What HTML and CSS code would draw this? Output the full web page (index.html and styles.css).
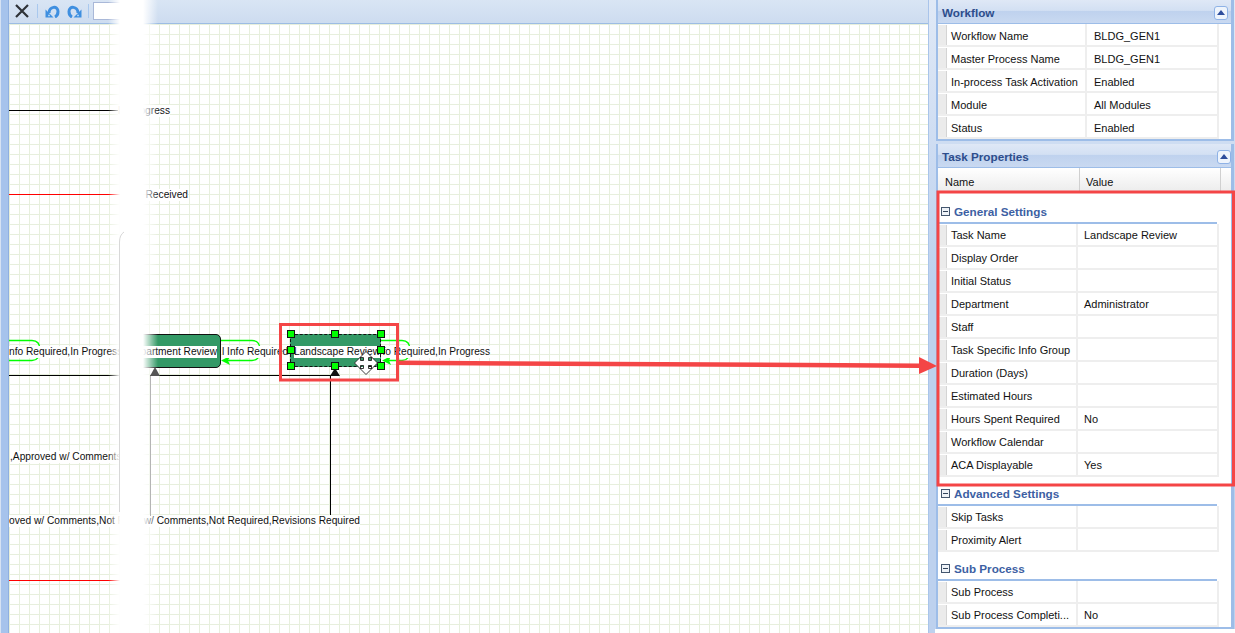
FILE: index.html
```html
<!DOCTYPE html>
<html>
<head>
    <title>Workflow Designer</title>
    <link rel="stylesheet" href="styles.css">
</head>
<body>
<div class="left-rail"></div>

<div class="designer">
    <div class="toolbar">
        <svg class="tool-icon" viewBox="0 0 14 14"><path d="M1 1 L13 13 M13 1 L1 13" stroke="#2f3338" stroke-width="2.2" fill="none"/></svg>
        <span class="tool-sep"></span>
        <svg class="tool-icon undo" viewBox="0 0 15 13"><path d="M4 8 C4 1.5 13 0 13 6.5 C13 9.5 12 11 10 12" stroke="#3f8fe0" stroke-width="3" fill="none"/><path d="M0.5 4.5 L0.5 12.5 L8.5 12.5 Z" fill="#3f8fe0"/><path d="M3 10.5 L5 10.5" stroke="#a6d0f4" stroke-width="1.5"/></svg>
        <svg class="tool-icon undo redo" viewBox="0 0 15 13"><path d="M11 8 C11 1.5 2 0 2 6.5 C2 9.5 3 11 5 12" stroke="#3f8fe0" stroke-width="3" fill="none"/><path d="M14.5 4.5 L14.5 12.5 L6.5 12.5 Z" fill="#3f8fe0"/><path d="M12 10.5 L10 10.5" stroke="#a6d0f4" stroke-width="1.5"/></svg>
        <span class="tool-sep second"></span>
        <input class="zoom-box" type="text">
    </div>

    <div class="canvas">
        <!-- connectors, page coordinates through the viewBox -->
        <svg class="wires" viewBox="9 24 919 609">
            <path d="M9 110.5 H125" stroke="#000" fill="none"/>
            <path d="M9 194.5 H125" stroke="#ff0000" fill="none"/>
            <path d="M9 580.5 H125" stroke="#ff0000" fill="none"/>
            <path d="M9 375.5 H125 M150 375.5 H330.5 V516" stroke="#000" fill="none"/>
            <path d="M9 340.5 H32 Q40 340.5 40 350 Q40 360.5 32 360.5 H9" stroke="#00ff00" stroke-width="1.3" fill="none"/>
            <path d="M221 340.5 H252 Q260 340.5 260 350 Q260 360.5 252 360.5 H226" stroke="#00ff00" stroke-width="1.3" fill="none"/>
            <path d="M221 360.5 L230 356 L228 360.5 L230 365 Z" fill="#00ff00"/>
            <path d="M381 340.5 H402 Q410 340.5 410 350 Q410 360.5 402 360.5 H386" stroke="#00ff00" stroke-width="1.3" fill="none"/>
            <path d="M382 360.5 L391 356 L389 360.5 L391 365 Z" fill="#00ff00"/>
        </svg>

        <div class="task task-dept"></div>
        <div class="task task-landscape"></div>

        <span class="label l-progress">In Progress</span>
        <span class="label l-received">Received</span>
        <span class="label l-info-a">nfo Required,In Progress</span>
        <span class="label l-dept">Department Review</span>
        <span class="label l-info-b">l Info Required</span>
        <span class="label l-landscape">Landscape Review</span>
        <span class="label l-info-c">fo Required,In Progress</span>
        <span class="label l-approved">,Approved w/ Comments</span>
        <span class="label l-not-req">oved w/ Comments,Not Re</span>
        <span class="label l-revisions">w/ Comments,Not Required,Revisions Required</span>

        <svg class="wires" viewBox="9 24 919 609">
            <path d="M335 368 L340 376 H330 Z" fill="#111"/>
        </svg>

        <span class="handle h1"></span><span class="handle h2"></span><span class="handle h3"></span>
        <span class="handle h4"></span><span class="handle h5"></span>
        <span class="handle h6"></span><span class="handle h7"></span><span class="handle h8"></span>
    </div>

    <div class="blur-strip"></div>

    <svg class="wires top-wires" viewBox="0 0 928 633">
        <path d="M119.5 512 V242 Q119.5 235 124 232" stroke="#d8d8d8" fill="none"/>
        <path d="M150.5 376 V516" stroke="#b4b4b4" fill="none"/>
        <path d="M155 367 L160 376 H150 Z" fill="#555"/>
    </svg>
</div>

<div class="sidebar">
    <div class="panel panel-workflow">
        <div class="panel-head">Workflow<span class="collapse"></span></div>
        <div class="row wide"><span class="row-handle"></span><span class="row-name">Workflow Name</span><span class="row-value">BLDG_GEN1</span></div>
        <div class="row wide"><span class="row-handle"></span><span class="row-name">Master Process Name</span><span class="row-value">BLDG_GEN1</span></div>
        <div class="row wide"><span class="row-handle"></span><span class="row-name">In-process Task Activation</span><span class="row-value">Enabled</span></div>
        <div class="row wide"><span class="row-handle"></span><span class="row-name">Module</span><span class="row-value">All Modules</span></div>
        <div class="row wide"><span class="row-handle"></span><span class="row-name">Status</span><span class="row-value">Enabled</span></div>
    </div>

    <div class="panel panel-task">
        <div class="panel-head">Task Properties<span class="collapse"></span></div>
        <div class="grid-head">
            <span class="col-name">Name</span>
            <span class="col-value">Value</span>
        </div>

        <div class="group-head first"><span class="minus"></span>General Settings</div>
        <div class="row"><span class="row-handle"></span><span class="row-name">Task Name</span><span class="row-value">Landscape Review</span></div>
        <div class="row"><span class="row-handle"></span><span class="row-name">Display Order</span><span class="row-value"></span></div>
        <div class="row"><span class="row-handle"></span><span class="row-name">Initial Status</span><span class="row-value"></span></div>
        <div class="row"><span class="row-handle"></span><span class="row-name">Department</span><span class="row-value">Administrator</span></div>
        <div class="row"><span class="row-handle"></span><span class="row-name">Staff</span><span class="row-value"></span></div>
        <div class="row"><span class="row-handle"></span><span class="row-name">Task Specific Info Group</span><span class="row-value"></span></div>
        <div class="row"><span class="row-handle"></span><span class="row-name">Duration (Days)</span><span class="row-value"></span></div>
        <div class="row"><span class="row-handle"></span><span class="row-name">Estimated Hours</span><span class="row-value"></span></div>
        <div class="row"><span class="row-handle"></span><span class="row-name">Hours Spent Required</span><span class="row-value">No</span></div>
        <div class="row"><span class="row-handle"></span><span class="row-name">Workflow Calendar</span><span class="row-value"></span></div>
        <div class="row"><span class="row-handle"></span><span class="row-name">ACA Displayable</span><span class="row-value">Yes</span></div>

        <div class="group-head"><span class="minus"></span>Advanced Settings</div>
        <div class="row"><span class="row-handle"></span><span class="row-name">Skip Tasks</span><span class="row-value"></span></div>
        <div class="row"><span class="row-handle"></span><span class="row-name">Proximity Alert</span><span class="row-value"></span></div>

        <div class="group-head"><span class="minus"></span>Sub Process</div>
        <div class="row"><span class="row-handle"></span><span class="row-name">Sub Process</span><span class="row-value"></span></div>
        <div class="row"><span class="row-handle"></span><span class="row-name">Sub Process Completi...</span><span class="row-value">No</span></div>
    </div>
    <div class="sidebar-foot"></div>
</div>

<!-- annotations drawn over the whole screenshot -->
<svg class="notes" viewBox="0 0 1235 633">
    <rect x="280.5" y="324.5" width="117" height="55.5" fill="none" stroke="#f44546" stroke-width="3"/>
    <rect x="938" y="192" width="295.5" height="293" fill="none" stroke="#f44546" stroke-width="3"/>
    <path d="M398 360.5 L920 363.5 V368 L398 365 Z" fill="#f44546"/>
    <path d="M919 357 L937 366 L919 374 Z" fill="#f44546"/>
    <path d="M366 351.5 L372 357.5 H368.5 V360.5 H371.5 V357 L377.5 363 L371.5 369 V365.5 H368.5 V368.5 H372 L366 374.5 L360 368.5 H363.5 V365.5 H360.5 V369 L354.5 363 L360.5 357 V360.5 H363.5 V357.5 H360 Z" fill="#fff" stroke="#222" stroke-width="0.9"/>
</svg>
</body>
</html>
```

FILE: styles.css
```css
html, body {
    margin: 0;
    height: 100%;
}
body {
    display: flex;
    height: 100vh;
    overflow: hidden;
    position: relative;
    font-family: "Liberation Sans", Arial, sans-serif;
    font-size: 11px;
    color: #111;
    background-color: #fff;
}

.left-rail {
    width: 9px;
    flex: none;
    border-left: 1px solid #d6e2f3;
    box-sizing: border-box;
    background-color: #a6c3ec;
    border-right: 1px solid #8fb0e0;
}

/* designer side */
.designer {
    position: relative;
    width: 919px;
    flex: none;
    display: flex;
    flex-direction: column;
}
.toolbar {
    height: 24px;
    flex: none;
    display: flex;
    align-items: center;
    padding: 0 0 1px 6px;
    box-sizing: border-box;
    background: linear-gradient(#d9e5f4, #cddcf0);
    border-bottom: 1px solid #9dbce4;
}
.tool-icon {
    width: 14px;
    height: 14px;
    flex: none;
}
.tool-icon:first-child {
    margin-right: 8px;
}
.undo {
    width: 15px;
    height: 13px;
}
.redo {
    margin-left: 7px;
}
.tool-sep {
    width: 1px;
    height: 14px;
    background-color: #a9c8ee;
    margin-right: 7px;
}
.tool-sep.second {
    margin: 0 4px 0 6px;
}
.zoom-box {
    width: 45px;
    height: 18px;
    box-sizing: border-box;
    border: 1px solid #a9b8d8;
    background-color: #fff;
    padding: 0;
}

.canvas {
    position: relative;
    flex: 1;
    overflow: hidden;
    background-color: #fff;
    background-image:
        linear-gradient(to right, #e7efdd 1px, transparent 1px),
        linear-gradient(to bottom, #e7efdd 1px, transparent 1px);
    background-size: 10px 10px;
    background-position: 0 0;
}
.wires {
    position: absolute;
    left: 0;
    top: 0;
    width: 919px;
    height: 609px;
    pointer-events: none;
}
.top-wires {
    left: -9px;
    width: 928px;
    height: 633px;
}

.task {
    position: absolute;
    box-sizing: border-box;
    background-color: #339966;
    border: 1px solid #111;
}
.task-dept {
    left: 113px;
    top: 310px;
    width: 99px;
    height: 34px;
    border-radius: 5px;
}
.task-landscape {
    left: 281px;
    top: 310px;
    width: 91px;
    height: 33px;
    border: 1px dashed #111;
}

.label {
    position: absolute;
    font-size: 10.2px;
    line-height: 12px;
    height: 12px;
    background-color: #fff;
    white-space: nowrap;
    color: #111;
}
.l-progress { right: 758px; top: 81px; }
.l-received { right: 740px; top: 165px; }
.l-info-a { left: 0; top: 322px; }
.l-dept { right: 711px; top: 322px; }
.l-info-b { left: 213px; top: 322px; }
.l-landscape { left: 285px; top: 322px; }
.l-info-c { right: 438px; top: 322px; }
.l-approved { left: 1px; top: 427px; }
.l-not-req { left: 0; top: 491px; }
.l-revisions { right: 568px; top: 491px; }

.handle {
    position: absolute;
    width: 6px;
    height: 6px;
    background-color: #00ff00;
    border: 1px solid #111;
}
.h1, .h4, .h6 { left: 278px; }
.h2, .h7 { left: 322px; }
.h3, .h5, .h8 { left: 368px; }
.h1, .h2, .h3 { top: 306px; }
.h4, .h5 { top: 322px; }
.h6, .h7, .h8 { top: 338px; }

.blur-strip {
    position: absolute;
    left: 99px;
    top: 0;
    bottom: 0;
    width: 50px;
    background: linear-gradient(to right, rgba(255,255,255,0) 0, #fff 24%, #fff 70%, rgba(255,255,255,0) 100%);
}

/* property panels */
.sidebar {
    flex: 1;
    padding: 0 1px 0 7px;
    background: linear-gradient(#e0e9f6, #bdd1ee 45%);
    border-left: 1px solid #a9c4ea;
    display: flex;
    flex-direction: column;
    gap: 3px;
    box-sizing: border-box;
    min-width: 0;
}
.panel {
    background-color: #fff;
    border-left: 2px solid #9dbde8;
    border-right: 3px solid #9dbde8;
    border-bottom: 2px solid #9dbde8;
}
.panel-task {
    flex: none;
}
.panel-head {
    position: relative;
    height: 24px;
    line-height: 25px;
    padding-left: 4px;
    box-sizing: border-box;
    font-size: 11.7px;
    font-weight: bold;
    color: #2d4d8c;
    background: linear-gradient(#dfe8f6 0, #d3e0f3 45%, #bfd2ee 50%, #c9d9f1 100%);
    border-bottom: 1px solid #9dbde8;
}
.panel-task .panel-head {
    line-height: 26px;
}
.collapse {
    position: absolute;
    right: 3px;
    top: 6px;
    width: 12px;
    height: 12px;
    border: 1px solid #8fb2e6;
    border-radius: 3px;
    background-color: #eef4fc;
}
.panel-task .collapse {
    right: 0;
}
.collapse::after {
    content: "";
    position: absolute;
    left: 2px;
    top: 3px;
    border-left: 4px solid transparent;
    border-right: 4px solid transparent;
    border-bottom: 5px solid #2d4d9c;
}
.sidebar-foot {
    flex: 1;
    margin: -3px -1px 0 -1px;
    background-color: #fff;
}

.grid-head {
    display: flex;
    height: 25px;
    line-height: 28px;
    box-sizing: border-box;
    background: linear-gradient(#fff, #ebebeb);
}
.col-name {
    width: 142px;
    padding-left: 7px;
    box-sizing: border-box;
    border-right: 1px solid #d0d0d0;
}
.col-value {
    width: 141px;
    padding-left: 6px;
    box-sizing: border-box;
    border-right: 1px solid #d0d0d0;
}

.group-head {
    display: flex;
    align-items: center;
    height: 29px;
    width: 279px;
    padding-top: 6px;
    box-sizing: border-box;
    font-size: 11.7px;
    font-weight: bold;
    color: #3d5fa3;
    border-bottom: 2px solid #9dbde8;
}
.group-head.first {
    height: 31px;
    padding-top: 7px;
}
.minus {
    position: relative;
    width: 7px;
    height: 7px;
    margin: 0 4px 0 3px;
    border: 1px solid #44566e;
    background-color: #eef2f7;
    flex: none;
}
.minus::after {
    content: "";
    position: absolute;
    left: 1px;
    right: 1px;
    top: 3px;
    height: 1px;
    background-color: #33445c;
}

.row {
    display: flex;
    width: 281px;
    height: 23px;
    box-sizing: border-box;
    line-height: 23px;
    border-bottom: 2px solid #eeeeee;
}
.row-handle {
    width: 9px;
    flex: none;
    box-sizing: border-box;
    background-color: #ebebeb;
    border-right: 1px solid #d4d4d4;
    margin-top: 1px;
}
.row-name {
    width: 131px;
    flex: none;
    padding-left: 4px;
    box-sizing: border-box;
    white-space: nowrap;
    overflow: hidden;
    border-right: 2px solid #eeeeee;
}
.row-value {
    flex: 1;
    padding-left: 6px;
    border-right: 2px solid #eeeeee;
}
.wide {
    line-height: 25px;
}
.wide .row-name {
    width: 140px;
}
.wide .row-value {
    padding-left: 7px;
}

.notes {
    position: absolute;
    left: 0;
    top: 0;
    width: 1235px;
    height: 633px;
    pointer-events: none;
}
```
